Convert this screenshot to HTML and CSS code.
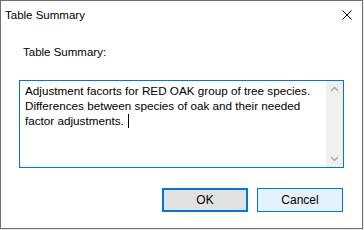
FILE: index.html
```html
<!DOCTYPE html>
<html lang="en">
<head>
    <meta charset="UTF-8">
    <title>Table Summary</title>
    <link rel="stylesheet" href="styles.css">
</head>
<body>
    <div class="dialog">
        <div class="titlebar">
            <span class="title">Table Summary</span>
            <svg class="close" width="10" height="10" viewBox="0 0 10 10">
                <path d="M0.5 0.5 L9.5 9.5 M9.5 0.5 L0.5 9.5" stroke="#000" stroke-width="1" fill="none"/>
            </svg>
        </div>
        <div class="content">
            <div class="label">Table Summary:</div>
            <div class="memo">
                <div class="memo-text">Adjustment facorts for RED OAK group of tree species. Differences between species of oak and their needed factor adjustments.<span class="caret"></span></div>
                <div class="scrollbar">
                    <svg width="17" height="17" viewBox="0 0 17 17">
                        <path d="M5 10 L8.5 6.5 L12 10" stroke="#a3a3a3" stroke-width="1.3" fill="none"/>
                    </svg>
                    <svg width="17" height="17" viewBox="0 0 17 17">
                        <path d="M5 7 L8.5 10.5 L12 7" stroke="#a3a3a3" stroke-width="1.3" fill="none"/>
                    </svg>
                </div>
            </div>
            <div class="buttons">
                <button class="btn default">OK</button>
                <button class="btn hover">Cancel</button>
            </div>
        </div>
    </div>
</body>
</html>
```

FILE: styles.css
```css
body {
    margin: 0;
    background-color: #e9e9e9;
    font-family: "Segoe UI", "Liberation Sans", Arial, sans-serif;
    font-size: 11.5px;
    color: #000;
}
.dialog {
    width: 361px;
    height: 227px;
    border: 1px solid #6f6f6f;
    background-color: #fff;
    display: flex;
    flex-direction: column;
}
.titlebar {
    height: 29px;
    display: flex;
    align-items: center;
    justify-content: space-between;
    padding: 0 10px 0 4px;
}
.title {
    margin-top: -2px;
}
.close {
    margin-top: -2px;
}
.content {
    padding: 0 18px 0 18px;
    flex: 1;
    display: flex;
    flex-direction: column;
}
.label {
    padding: 15px 0 0 4px;
    line-height: 15px;
}
.memo {
    margin-top: 20px;
    width: 323px;
    height: 86px;
    border: 1px solid #0078d7;
    display: flex;
}
.memo-text {
    flex: 1;
    padding: 2px 4px 0 5px;
    font-size: 11.7px;
    line-height: 15px;
}
.caret {
    display: inline-block;
    width: 1px;
    height: 14px;
    margin-left: 4px;
    vertical-align: -3px;
    background-color: #000;
}
.scrollbar {
    width: 17px;
    background-color: #f0f0f0;
    display: flex;
    flex-direction: column;
    justify-content: space-between;
}
.scrollbar svg {
    display: block;
}
.buttons {
    margin-top: 20px;
    display: flex;
    justify-content: flex-end;
    gap: 9px;
    padding-right: 1px;
}
.btn {
    width: 86px;
    height: 24px;
    font-family: inherit;
    font-size: 12px;
    color: #000;
    padding: 0;
    background-color: #e1e1e1;
    border: 1px solid #adadad;
}
.btn.default {
    border: 2px solid #0078d7;
}
.btn.hover {
    background-color: #e5f1fb;
    border: 1px solid #0078d7;
}
```
